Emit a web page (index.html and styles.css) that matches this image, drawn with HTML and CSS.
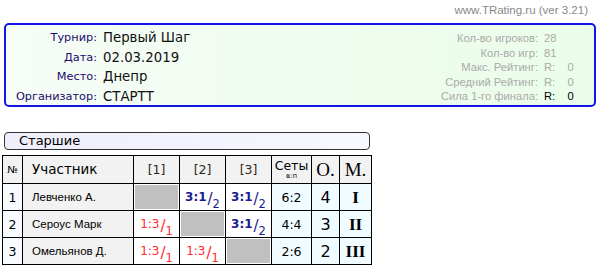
FILE: index.html
```html
<!DOCTYPE html>
<html lang="ru">
<head>
<meta charset="utf-8">
<link rel="stylesheet" href="styles.css">
</head>
<body>
<div class="top">www.TRating.ru (ver 3.21)</div>
<div class="info">
  <div class="info-left">
    <div class="lbl">Турнир:</div><div class="val">Первый Шаг</div>
    <div class="lbl">Дата:</div><div class="val">02.03.2019</div>
    <div class="lbl">Место:</div><div class="val">Днепр</div>
    <div class="lbl">Организатор:</div><div class="val">СТАРТТ</div>
  </div>
  <div class="info-right">
    <div class="rl">Кол-во игроков:</div><div class="rv">28</div>
    <div class="rl">Кол-во игр:</div><div class="rv">81</div>
    <div class="rl">Макс. Рейтинг:</div><div class="rv">R:&nbsp;&nbsp;&nbsp;&nbsp;0</div>
    <div class="rl">Средний Рейтинг:</div><div class="rv">R:&nbsp;&nbsp;&nbsp;&nbsp;0</div>
    <div class="rl">Сила 1-го финала:</div><div class="rv dark">R:&nbsp;&nbsp;&nbsp;&nbsp;0</div>
  </div>
</div>
<div class="group">Старшие</div>
<table class="grid">
  <tr class="head">
    <th class="c-no">№</th>
    <th class="c-name">Участник</th>
    <th class="c-g">[1]</th>
    <th class="c-g">[2]</th>
    <th class="c-g">[3]</th>
    <th class="c-sets">Сеты<span class="sub">в:п</span></th>
    <th class="c-o serif">О.</th>
    <th class="c-m serif">М.</th>
  </tr>
  <tr>
    <td class="no">1</td>
    <td class="name">Левченко А.</td>
    <td class="diag"></td>
    <td class="sc win">3:1<span class="fr">/</span><span class="pt">2</span></td>
    <td class="sc win">3:1<span class="fr">/</span><span class="pt">2</span></td>
    <td class="sets">6:2</td>
    <td class="pts">4</td>
    <td class="place">I</td>
  </tr>
  <tr>
    <td class="no">2</td>
    <td class="name">Сероус Марк</td>
    <td class="sc loss">1:3<span class="fr">/</span><span class="pt">1</span></td>
    <td class="diag"></td>
    <td class="sc win">3:1<span class="fr">/</span><span class="pt">2</span></td>
    <td class="sets">4:4</td>
    <td class="pts">3</td>
    <td class="place">II</td>
  </tr>
  <tr>
    <td class="no">3</td>
    <td class="name">Омельянов Д.</td>
    <td class="sc loss">1:3<span class="fr">/</span><span class="pt">1</span></td>
    <td class="sc loss">1:3<span class="fr">/</span><span class="pt">1</span></td>
    <td class="diag"></td>
    <td class="sets">2:6</td>
    <td class="pts">2</td>
    <td class="place">III</td>
  </tr>
</table>
</body>
</html>
```
FILE: styles.css
```css
html, body { margin: 0; padding: 0; background: #fff; }
body { font-family: "DejaVu Sans", Verdana, sans-serif; color: #000; }
.top {
  text-align: right;
  font-family: "Liberation Sans", Arial, sans-serif;
  font-size: 11.5px;
  color: #888;
  padding: 4px 12px 0 0;
  height: 18px;
  box-sizing: border-box;
}
.info {
  margin: 5px 4px 0 4px;
  height: 84px;
  box-sizing: border-box;
  border: 2px solid #1414e6;
  border-radius: 5px;
  background: linear-gradient(to right, #f6fcf6, #eafdea);
  display: flex;
  justify-content: space-between;
  padding: 3px 0 0 0;
}
.info-left {
  display: grid;
  grid-template-columns: 91px auto;
  column-gap: 6px;
  grid-auto-rows: 19.5px;
  align-items: center;
}
.lbl { text-align: right; color: #1a0a6e; font-size: 11.3px; }
.val { font-size: 13.3px; color: #111; }
.info-right {
  display: grid;
  grid-template-columns: 170px 50px;
  column-gap: 6px;
  grid-auto-rows: 14.5px;
  align-items: center;
  font-family: "Liberation Sans", Arial, sans-serif;
  font-size: 11.2px;
  color: #aaa;
  padding-top: 3px;
}
.rl { text-align: right; }
.rv.dark { color: #000; }
.group {
  margin: 25px 0 0 4px;
  width: 366px;
  height: 18px;
  box-sizing: border-box;
  border: 1px solid #333;
  border-radius: 4px;
  background: linear-gradient(to right, #eeeefc, #f8f8ff);
  font-size: 13px;
  padding-left: 14px;
  line-height: 16px;
}
.grid {
  margin: 5px 0 0 2px;
  border-collapse: collapse;
  font-size: 12px;
}
.grid th, .grid td {
  border: 1px solid #000;
  padding: 0;
  text-align: center;
  vertical-align: middle;
  line-height: 15px;
}
.head th { height: 27px; background: #f2f2f2; font-weight: normal; }
.c-no { width: 19px; font-size: 10px; }
.c-name { width: 111px; font-size: 13.5px; text-align: left !important; padding-left: 9px !important; box-sizing: border-box; }
.c-g { width: 45px; color: #302818; font-size: 12.5px; }
.c-sets { width: 39px; font-size: 12.5px; line-height: 12px !important; }
.sub { display: block; font-size: 7px; line-height: 8px; }
.c-o { width: 27px; }
.c-m { width: 31px; }
.serif { font-family: "Liberation Serif", "Times New Roman", serif; font-size: 19px; }
.grid tr:not(.head) td { height: 26px; }
.no { background: #f7fbff; font-size: 12.5px; }
.name { background: #f2f2f2; text-align: left !important; padding-left: 9px !important; font-family: "Liberation Sans", Arial, sans-serif; font-size: 11.5px; }
.diag { background: #c0c0c0; box-shadow: inset 0 0 0 1px #fff; }
.sc { background: #fff; font-size: 12px; white-space: nowrap; }
.win { color: #1a1a90; font-weight: bold; }
.loss { color: #ff2a2a; }
.fr { font-weight: normal; font-size: 15px; line-height: 10px; position: relative; top: 3px; margin-left: 1px; }
.pt { font-weight: normal; font-size: 11.5px; line-height: 10px; position: relative; top: 7px; }
.sets { background: #f0fcff; font-size: 12.5px; }
.pts { background: #f0fcff; font-size: 16px; }
.place { background: #f0fcff; font-family: "Liberation Serif", "Times New Roman", serif; font-weight: bold; font-size: 17px; }
```
